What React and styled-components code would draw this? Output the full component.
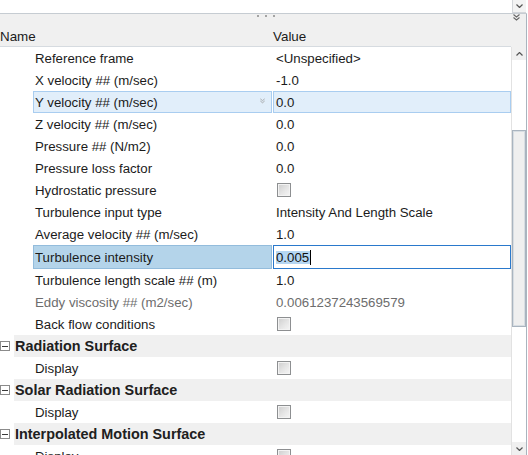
import React from "react";
import styled, { createGlobalStyle } from "styled-components";

const Global = createGlobalStyle`
  html, body { margin: 0; padding: 0; background: #ffffff; }
  body { font-family: "Liberation Sans", Arial, sans-serif; }
`;

const Frame = styled.div`
  width: 528px;
  height: 455px;
  overflow: hidden;
  background: #ffffff;
  display: flex;
  flex-direction: column;
`;

const TopStrip = styled.div`
  height: 13px;
  flex: none;
  width: 527px;
  border-bottom: 1px solid #c6ccd2;
  display: flex;
  justify-content: flex-end;
`;

const MiniButton = styled.div`
  width: 13px;
  height: 12px;
  background: #f3f3f3;
  border-left: 1px solid #d3d6da;
  border-bottom: 1px solid #d3d6da;
  display: flex;
  align-items: center;
  justify-content: center;
  margin-right: 1px;
`;

const Panel = styled.div`
  flex: 1;
  width: 526px;
  border-right: 1px solid #aab4be;
  background: #f0f0f0;
  display: flex;
  flex-direction: column;
  min-height: 0;
`;

const GripBar = styled.div`
  height: 13px;
  flex: none;
  display: flex;
  align-items: flex-start;
  justify-content: center;
  position: relative;
`;

const Dots = styled.div`
  display: flex;
  gap: 6px;
  margin-top: 1px;
  margin-left: 6px;
`;

const Dot = styled.span`
  width: 2px;
  height: 2px;
  background: #a3a3a3;
`;

const Collapse = styled.div`
  position: absolute;
  right: 6px;
  top: 0px;
  line-height: 0;
`;

const Header = styled.div`
  height: 19px;
  width: 511px;
  flex: none;
  border-bottom: 1px solid #d6dbe0;
  display: flex;
  align-items: center;
  font-size: 13.4px;
  color: #1b1b1b;
`;

const HeaderCell = styled.div`
  width: ${(p) => p.$w}px;
  flex: none;
  box-sizing: border-box;
  white-space: nowrap;
`;

const Body = styled.div`
  flex: 1;
  display: flex;
  min-height: 0;
  background: #ffffff;
`;

const Grid = styled.div`
  width: 511px;
  flex: none;
  display: flex;
  flex-direction: column;
`;

const PropRow = styled.div`
  height: ${(p) => (p.$tall ? 24 : 22)}px;
  flex: none;
  display: flex;
  font-size: 13.25px;
  color: ${(p) => (p.$disabled ? "#6d6d6d" : "#1b1b1b")};
`;

const NameCell = styled.div`
  margin-left: 33px;
  width: 239px;
  flex: none;
  box-sizing: border-box;
  padding-left: 1px;
  display: flex;
  align-items: center;
  white-space: nowrap;
  position: relative;
  border: 1px solid
    ${(p) =>
      p.$state === "hover" ? "#a9cdf0" : p.$state === "edit" ? "#93bcdc" : "transparent"};
  background: ${(p) =>
    p.$state === "hover" ? "#e1eefa" : p.$state === "edit" ? "#b4d4ea" : "transparent"};
`;

const ValueCell = styled.div`
  margin-left: 1px;
  width: 238px;
  flex: none;
  box-sizing: border-box;
  padding-left: 2px;
  display: flex;
  align-items: center;
  white-space: nowrap;
  border: 1px solid
    ${(p) =>
      p.$state === "hover" ? "#a9cdf0" : p.$state === "edit" ? "#2a79cc" : "transparent"};
  background: ${(p) => (p.$state === "hover" ? "#e1eefa" : "transparent")};
`;

const HoverGlyph = styled.span`
  position: absolute;
  right: 6px;
  top: 6px;
  line-height: 0;
`;

const Selected = styled.span`
  background: #b5d6f2;
  color: #111;
  line-height: 13px;
  padding: 0 1px 0 0;
`;

const Caret = styled.span`
  width: 1px;
  height: 15px;
  background: #000;
`;

const Check = styled.span`
  width: 12px;
  height: 12px;
  margin-left: 1px;
  border: 1px solid #8d8f91;
  box-shadow: inset 0 0 0 1px #f3f3f3;
  background: linear-gradient(135deg, #cdcdcd 0%, #e6e6e6 55%, #f6f6f6 100%);
`;

const SectionRow = styled.div`
  height: 22px;
  flex: none;
  display: flex;
  align-items: center;
`;

const Expander = styled.span`
  width: 8px;
  height: 8px;
  flex: none;
  border: 1px solid #8b8b8b;
  background: #ffffff;
  display: flex;
  align-items: center;
  justify-content: center;
  margin-right: 4px;
`;

const Minus = styled.span`
  width: 6px;
  height: 1px;
  background: #3a3a3a;
`;

const SectionTitle = styled.div`
  flex: 1;
  align-self: stretch;
  background: #f0f0f0;
  padding-left: 1px;
  display: flex;
  align-items: center;
  font-weight: bold;
  font-size: 14.4px;
  color: #202020;
  white-space: nowrap;
`;

const ScrollBar = styled.div`
  width: 14px;
  flex: none;
  border-left: 1px solid #e2e2e2;
  display: flex;
  flex-direction: column;
  background: #ffffff;
`;

const ScrollBtn = styled.div`
  height: 13px;
  flex: none;
  background: #f0f0f0;
  display: flex;
  align-items: center;
  justify-content: center;
  margin-top: ${(p) => (p.$bottom ? "auto" : "0")};
`;

const Thumb = styled.div`
  flex: none;
  box-sizing: border-box;
  border: 1px solid #a9b4bf;
  box-shadow: inset 0 0 0 1px #d7dde2;
  background: #efefef;
`;

const Chevron = ({ up }) => (
  <svg width="7" height="4" viewBox="0 0 7 4">
    <path
      d={up ? "M0.5 3.5 L3.5 0.5 L6.5 3.5" : "M0.5 0.5 L3.5 3.5 L6.5 0.5"}
      fill="none"
      stroke="#555"
      strokeWidth="1.2"
    />
  </svg>
);

const DoubleChevron = ({ color = "#666", w = 7, h = 7 }) => (
  <svg width={w} height={h} viewBox="0 0 7 7">
    <path d="M0.5 0.5 L3.5 3 L6.5 0.5 M0.5 3.5 L3.5 6 L6.5 3.5" fill="none" stroke={color} strokeWidth="1.1" />
  </svg>
);

const rows = [
  { name: "Reference frame", value: "<Unspecified>" },
  { name: "X velocity ## (m/sec)", value: "-1.0" },
  { name: "Y velocity ## (m/sec)", value: "0.0", state: "hover" },
  { name: "Z velocity ## (m/sec)", value: "0.0" },
  { name: "Pressure ## (N/m2)", value: "0.0" },
  { name: "Pressure loss factor", value: "0.0" },
  { name: "Hydrostatic pressure", check: true },
  { name: "Turbulence input type", value: "Intensity And Length Scale" },
  { name: "Average velocity ## (m/sec)", value: "1.0" },
  { name: "Turbulence intensity", value: "0.005", state: "edit" },
  { name: "Turbulence length scale ## (m)", value: "1.0" },
  { name: "Eddy viscosity ## (m2/sec)", value: "0.0061237243569579", disabled: true },
  { name: "Back flow conditions", check: true },
  { section: "Radiation Surface" },
  { name: "Display", check: true },
  { section: "Solar Radiation Surface" },
  { name: "Display", check: true },
  { section: "Interpolated Motion Surface" },
  { name: "Display", check: true },
];

function Row({ r }) {
  if (r.section) {
    return (
      <SectionRow>
        <Expander>
          <Minus />
        </Expander>
        <SectionTitle>{r.section}</SectionTitle>
      </SectionRow>
    );
  }
  return (
    <PropRow $tall={r.state === "edit"} $disabled={r.disabled}>
      <NameCell $state={r.state}>
        {r.name}
        {r.state === "hover" && (
          <HoverGlyph>
            <DoubleChevron color="#9a9a9a" w={5} h={6} />
          </HoverGlyph>
        )}
      </NameCell>
      <ValueCell $state={r.state}>
        {r.check ? (
          <Check />
        ) : r.state === "edit" ? (
          <>
            <Selected>{r.value}</Selected>
            <Caret />
          </>
        ) : (
          r.value
        )}
      </ValueCell>
    </PropRow>
  );
}

export default function App() {
  return (
    <Frame>
      <Global />
      <TopStrip>
        <MiniButton>
          <Chevron />
        </MiniButton>
      </TopStrip>
      <Panel>
        <GripBar>
          <Dots>
            <Dot />
            <Dot />
            <Dot />
          </Dots>
          <Collapse>
            <DoubleChevron />
          </Collapse>
        </GripBar>
        <Header>
          <HeaderCell $w={273}>Name</HeaderCell>
          <HeaderCell $w={238}>Value</HeaderCell>
        </Header>
        <Body>
          <Grid>
            {rows.map((r, i) => (
              <Row key={i} r={r} />
            ))}
          </Grid>
          <ScrollBar>
            <ScrollBtn>
              <Chevron up />
            </ScrollBtn>
            <Thumb style={{ marginTop: 70, height: 197 }} />
            <ScrollBtn $bottom>
              <Chevron />
            </ScrollBtn>
          </ScrollBar>
        </Body>
      </Panel>
    </Frame>
  );
}
